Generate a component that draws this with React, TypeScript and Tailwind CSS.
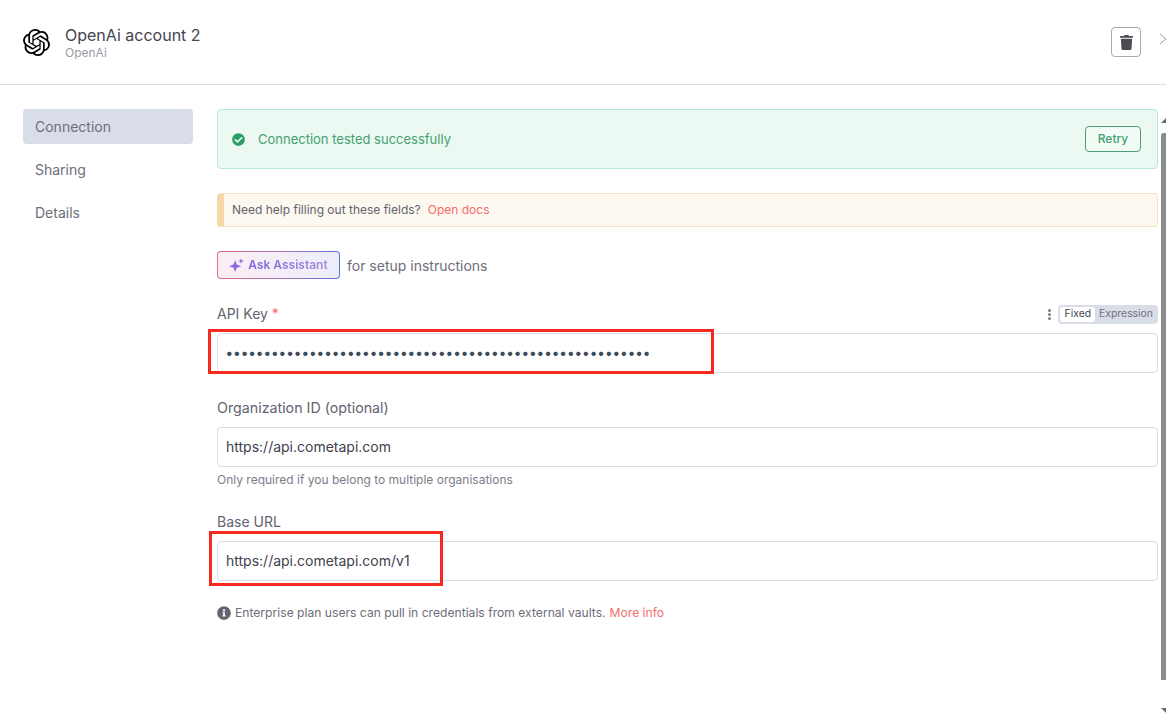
import { SiOpenai } from "react-icons/si";
import { FaTrash, FaCheckCircle, FaInfoCircle } from "react-icons/fa";

const dots = "•".repeat(56);

function Sparkle() {
  return (
    <svg width="15" height="15" viewBox="0 0 16 16" aria-hidden>
      <defs>
        <linearGradient id="spark" x1="0" y1="1" x2="1" y2="0">
          <stop offset="0" stopColor="#b45ad8" />
          <stop offset="1" stopColor="#6f6be8" />
        </linearGradient>
      </defs>
      <path d="M6.5 2.5 8.2 7 13 8.7 8.2 10.4 6.5 15 4.8 10.4 0 8.7 4.8 7z" fill="url(#spark)" />
      <path d="M12.8 0.5l.8 2 2 .8-2 .8-.8 2-.8-2-2-.8 2-.8z" fill="url(#spark)" />
    </svg>
  );
}

function Field({ value, className }: { value: string; className?: string }) {
  return (
    <div className="flex h-10 items-center rounded border border-[#d9dde8] bg-white px-2 text-sm text-[#41414d]">
      <span className={className}>{value}</span>
    </div>
  );
}

export default function App() {
  return (
    <div
      className="relative h-[723px] w-[1166px] overflow-hidden bg-white"
      style={{ fontFamily: "Inter, sans-serif" }}
    >
      <header className="flex h-[85px] items-center overflow-hidden border-b border-[#dcdfe9] pl-[23px]">
        <SiOpenai className="shrink-0 text-[27px] text-black" />
        <div className="ml-[15px] pt-[2px]">
          <div className="text-base leading-5 text-[#44444f]">OpenAi account 2</div>
          <div className="text-xs leading-4 text-[#9a9aa8]">OpenAi</div>
        </div>
        <button className="ml-auto flex h-[30px] w-[30px] shrink-0 items-center justify-center rounded border border-[#a8a8b2] bg-white">
          <FaTrash className="text-[15px] text-[#4a4a52]" />
        </button>
        <svg className="mb-[6px] ml-[19px] shrink-0" width="6" height="12" viewBox="0 0 6 12" aria-hidden>
          <path d="M0 1 6 6 0 11" fill="none" stroke="#9a9aa2" strokeWidth="1" />
        </svg>
      </header>

      <div className="flex pl-[23px] pt-6">
        <nav className="w-[170px] shrink-0 text-sm text-[#6e6e7a]">
          <div className="flex h-[35px] items-center rounded bg-[#d9dde8] px-3">Connection</div>
          <div className="mt-2 flex h-[35px] items-center px-3">Sharing</div>
          <div className="mt-2 flex h-[35px] items-center px-3">Details</div>
        </nav>

        <main className="ml-6 w-[941px]">
          <div className="flex h-[60px] items-center rounded border border-[#b8ead0] bg-[#ebf9f2] pl-[14px] pr-4">
            <FaCheckCircle className="text-[13px] text-[#2b9e63]" />
            <span className="ml-[13px] pt-[2px] text-[13px] text-[#45a06f]">Connection tested successfully</span>
            <button className="ml-auto flex h-[26px] w-[56px] items-center justify-center rounded border border-[#4d9e75] bg-white/40 text-xs font-medium text-[#45a06f]">
              Retry
            </button>
          </div>

          <div className="mt-6 flex h-[34px] items-center rounded border border-l-[7px] border-[#f5e0c5] border-l-[#f5d7a8] bg-[#fdf8f0] pl-2 text-xs text-[#63636f]">
            Need help filling out these fields?
            <span className="ml-[7px] text-[#f56c6c]">Open docs</span>
          </div>

          <div className="mt-6 flex h-[28px] items-center">
            <div className="h-[28px] w-[123px] rounded bg-gradient-to-r from-[#e66a84] to-[#5f6ee0] p-px">
              <div className="flex h-full items-center justify-center gap-[4px] rounded-[3px] bg-gradient-to-r from-[#fbeef3] to-[#eceefc] text-xs font-semibold">
                <Sparkle />
                <span className="bg-gradient-to-r from-[#7a62e0] to-[#a98bd8] bg-clip-text text-transparent">Ask Assistant</span>
              </div>
            </div>
            <span className="ml-[7px] pt-[1px] text-sm text-[#6e6e7a]">for setup instructions</span>
          </div>

          <div className="mt-6 flex h-[30px] items-center pb-2">
            <span className="text-sm text-[#63636f]">API Key <span className="text-[#f56c6c]">*</span></span>
            <div className="ml-auto flex items-center">
              <span className="mr-[7px] flex flex-col gap-px">
                <i className="h-[3px] w-[3px] rounded-full bg-[#7d7d87]" />
                <i className="h-[3px] w-[3px] rounded-full bg-[#7d7d87]" />
                <i className="h-[3px] w-[3px] rounded-full bg-[#7d7d87]" />
              </span>
              <div className="flex h-[19px] items-center rounded bg-[#d9dde8] p-0.5 text-[10.4px]">
                <span className="flex h-[15px] items-center rounded-[3px] bg-white pl-[5px] pr-[4px] text-[#44444f]">Fixed</span>
                <span className="pl-[4px] pr-[3px] text-[#71717f]">Expression</span>
              </div>
            </div>
          </div>
          <Field value={dots} className="font-bold tracking-[0.95px] text-[#3d4a5c]" />

          <div className="mt-6 text-[14.25px] leading-[22px] text-[#63636f]">Organization ID (optional)</div>
          <div className="mt-2"><Field value="https://api.cometapi.com" /></div>
          <div className="mt-[5px] text-xs leading-4 text-[#7d7d8a]">Only required if you belong to multiple organisations</div>

          <div className="mt-[23px] text-sm leading-[22px] text-[#63636f]">Base URL</div>
          <div className="mt-2"><Field value="https://api.cometapi.com/v1" /></div>

          <div className="mt-6 flex items-center text-[12.13px] leading-4 text-[#6e6e7a]">
            <FaInfoCircle className="mr-[4px] text-sm text-[#63636f]" />
            Enterprise plan users can pull in credentials from external vaults.
            <span className="ml-1 text-[#f56c6c]">More info</span>
          </div>
        </main>
      </div>

      {/* annotation boxes drawn over the screenshot */}
      <div className="absolute left-[208px] top-[329px] h-[45px] w-[506px] border-[3px] border-[#f5291f]" />
      <div className="absolute left-[209px] top-[531px] h-[55px] w-[234px] border-[3px] border-[#f5291f]" />

      {/* window scrollbar */}
      <div className="absolute right-0 top-[133px] h-[547px] w-[5px] rounded-tl-[3px] bg-[#8b8b8b]" />
      <div className="absolute right-0 top-[118px] h-0 w-0 border-b-[5px] border-l-[5px] border-b-[#6b6b6b] border-l-transparent" />
      <div className="absolute right-0 top-[708px] h-0 w-0 border-t-[5px] border-l-[5px] border-t-[#6b6b6b] border-l-transparent" />
    </div>
  );
}
